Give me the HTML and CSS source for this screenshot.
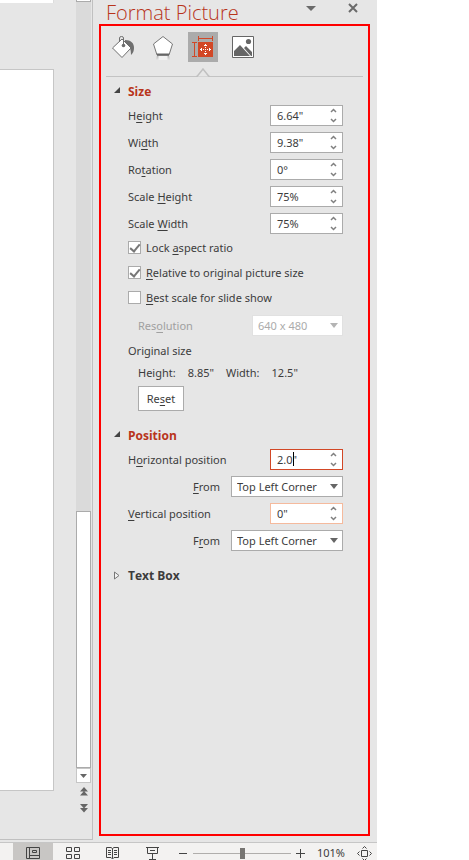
FILE: index.html
```html
<!DOCTYPE html>
<html lang="en">
<head>
<meta charset="utf-8">
<meta name="viewport" content="width=device-width, initial-scale=1">
<title>Format Picture</title>
<link rel="stylesheet" href="styles.css">
</head>
<body>
<div class="app">
  <main class="workspace">
    <section class="canvas" aria-label="Slides">
      <div class="slides">
        <div class="slide slide-previous"></div>
        <div class="slide slide-current"></div>
      </div>
      <div class="scrollbar">
        <div class="track-end"></div>
        <div class="track"></div>
        <div class="thumb"></div>
        <button class="scroll-down" aria-label="Scroll down"><svg width="7" height="4" viewBox="0 0 7 4"><path d="M0 0h7L3.500 4z"/></svg></button>
        <button class="slide-step" aria-label="Previous slide"><svg width="8" height="9" viewBox="0 0 8 9"><path d="M4 0l4 4.500H0zM4 4l4 4.500H0z"/></svg></button>
        <button class="slide-step" aria-label="Next slide"><svg width="8" height="9" viewBox="0 0 8 9"><path d="M0 0h8L4 4.500zM0 4h8L4 8.500z"/></svg></button>
      </div>
    </section>

    <aside class="pane">
      <header class="pane-header">
        <h1>Format Picture</h1>
        <button class="pane-menu" aria-label="Pane options"><svg width="10" height="5" viewBox="0 0 10 5"><path d="M0 0h10L5 5z"/></svg></button>
        <button class="pane-close" aria-label="Close"><svg width="10" height="10" viewBox="0 0 10 10"><path d="M1 1l8 8M9 1L1 9" fill="none" stroke="#6a6a6a" stroke-width="2"/></svg></button>
      </header>

      <div class="pane-frame">
        <nav class="tabs">
          <button class="tab" aria-label="Fill and line">
            <svg width="26" height="26" viewBox="0 0 26 26">
              <path d="M15 6c6 0 9 3 9 8 0 3-1 5-3 7 0-6-1-9-6-11z" fill="#6f6f6f"/>
              <path d="M2.500 14L12 5l9 9-9 9.500z" fill="#fff" stroke="#6f6f6f"/>
              <path d="M9.500 8V4q0-1.500 2-1.500t2 1.500v7" fill="none" stroke="#6f6f6f"/>
              <circle cx="13.500" cy="11.500" r="1.800" fill="#6f6f6f"/>
            </svg>
          </button>
          <button class="tab" aria-label="Effects">
            <svg width="26" height="26" viewBox="0 0 26 26">
              <defs><linearGradient id="fade" x2="0" y2="1"><stop stop-color="#aaa"/><stop offset="1" stop-color="#e6e6e6"/></linearGradient></defs>
              <path d="M7 21h12l1 5H6z" fill="url(#fade)"/><path d="M8.500 22h9v4h-9z" fill="#f1f1f1"/>
              <path d="M13 2.500l9.500 7.500-3.500 11H7L3.500 10z" fill="#fff" stroke="#777"/>
              <path d="M7 20.500h12" stroke="#666" stroke-width="2"/>
            </svg>
          </button>
          <button class="tab tab-selected" aria-label="Size and properties">
            <svg width="30" height="30" viewBox="0 0 30 30">
              <path d="M10 10h15v15H10z" fill="#d24726"/>
              <g fill="none" stroke="#d24726"><path d="M10.500 4v5M24.500 4v5M11 6.500h13M4 10.500h5M4 24.500h5M6.500 11v13"/></g>
              <path d="M17 12h1v1h1v1h-3v-1h1zM17 15h1v1h-1zM17 17h1v1h-1zM17 19h1v1h-1zM15 17h1v1h-1zM19 17h1v1h-1zM16 21h3v1h-1v1h-1v-1h-1zM12 17h1v-1h1v3h-1v-1h-1zM21 16h1v1h1v1h-1v1h-1z" fill="#fff"/>
            </svg>
          </button>
          <button class="tab" aria-label="Picture">
            <svg width="26" height="26" viewBox="0 0 26 26">
              <path d="M2.500 2.500h21v21h-21z" fill="#fff" stroke="#666"/>
              <circle cx="18.500" cy="7.500" r="2.600" fill="#666"/>
              <path d="M4 22v-5l6-6 10 11zM14 14l2-2 6 6v4h-1z" fill="#666"/>
            </svg>
          </button>
        </nav>
        <div class="tab-rule"><svg class="notch" width="14" height="9" viewBox="0 0 14 9"><path d="M0 8.500h1L7 1l6 7.500h1" fill="#e6e6e6" stroke="#c0c0c0" stroke-width="1.500"/></svg></div>

        <form class="settings">
          <section class="group">
            <h2 class="open"><svg class="twisty" width="6" height="6" viewBox="0 0 6 6"><path d="M6 0v6H0z"/></svg>Size</h2>
            <div class="rows">
              <div class="row"><label for="height">H<u>e</u>ight</label>
                <div class="spin"><input id="height" type="text" value="6.64&quot;"><svg class="arrows" width="7" height="15" viewBox="0 0 7 15"><path d="M1 4l2.500-2.500L6 4M1 11l2.500 2.500L6 11"/></svg></div></div>
              <div class="row"><label for="width">Wi<u>d</u>th</label>
                <div class="spin"><input id="width" type="text" value="9.38&quot;"><svg class="arrows" width="7" height="15" viewBox="0 0 7 15"><path d="M1 4l2.500-2.500L6 4M1 11l2.500 2.500L6 11"/></svg></div></div>
              <div class="row"><label for="rotation">Ro<u>t</u>ation</label>
                <div class="spin"><input id="rotation" type="text" value="0°"><svg class="arrows" width="7" height="15" viewBox="0 0 7 15"><path d="M1 4l2.500-2.500L6 4M1 11l2.500 2.500L6 11"/></svg></div></div>
              <div class="row"><label for="scale-height">Scale <u>H</u>eight</label>
                <div class="spin"><input id="scale-height" type="text" value="75%"><svg class="arrows" width="7" height="15" viewBox="0 0 7 15"><path d="M1 4l2.500-2.500L6 4M1 11l2.500 2.500L6 11"/></svg></div></div>
              <div class="row"><label for="scale-width">Scale <u>W</u>idth</label>
                <div class="spin"><input id="scale-width" type="text" value="75%"><svg class="arrows" width="7" height="15" viewBox="0 0 7 15"><path d="M1 4l2.500-2.500L6 4M1 11l2.500 2.500L6 11"/></svg></div></div>
            </div>
            <div class="checks">
              <label class="check"><input type="checkbox" checked><span>Lock <u>a</u>spect ratio</span></label>
              <label class="check"><input type="checkbox" checked><span><u>R</u>elative to original picture size</span></label>
              <label class="check"><input type="checkbox"><span><u>B</u>est scale for slide show</span></label>
            </div>
            <div class="row resolution"><label for="resolution">Res<u>o</u>lution</label>
              <div class="pick pick-small"><select id="resolution" disabled><option>640 x 480</option></select></div></div>
            <p class="original">Original size</p>
            <dl class="measures"><dt>Height:</dt><dd>8.85"</dd><dt>Width:</dt><dd>12.5"</dd></dl>
            <button type="button" class="reset">Re<u>s</u>et</button>
          </section>

          <section class="group">
            <h2 class="open"><svg class="twisty" width="6" height="6" viewBox="0 0 6 6"><path d="M6 0v6H0z"/></svg>Position</h2>
            <div class="rows">
              <div class="row"><label for="horizontal">H<u>o</u>rizontal position</label>
                <div class="spin spin-active"><input id="horizontal" type="text" value="2.0&quot;"><span class="caret"></span><svg class="arrows" width="7" height="15" viewBox="0 0 7 15"><path d="M1 4l2.500-2.500L6 4M1 11l2.500 2.500L6 11"/></svg></div></div>
              <div class="row row-from"><label for="from-x"><u>F</u>rom</label>
                <div class="pick"><select id="from-x"><option>Top Left Corner</option></select></div></div>
              <div class="row"><label for="vertical"><u>V</u>ertical position</label>
                <div class="spin spin-hover"><input id="vertical" type="text" value="0&quot;"><svg class="arrows" width="7" height="15" viewBox="0 0 7 15"><path d="M1 4l2.500-2.500L6 4M1 11l2.500 2.500L6 11"/></svg></div></div>
              <div class="row row-from"><label for="from-y">F<u>r</u>om</label>
                <div class="pick"><select id="from-y"><option>Top Left Corner</option></select></div></div>
            </div>
          </section>

          <section class="group">
            <h2><svg class="twisty" width="6" height="9" viewBox="0 0 6 9"><path d="M.5 1v7L5 4.500z" fill="#f4f4f4" stroke="#777"/></svg>Text Box</h2>
          </section>
        </form>
      </div>
    </aside>
  </main>

  <footer class="status">
    <button class="view view-selected" aria-label="Normal view"><svg width="14" height="12" viewBox="0 0 14 12"><path d="M.5.5h13v11H.5zM3.500.5v11M3.500 8.500h10M6.500 3.500h4v2h-4z"/></svg></button>
    <button class="view" aria-label="Slide sorter"><svg width="14" height="12" viewBox="0 0 14 12"><path d="M.5.5h5v4h-5zM8.500.5h5v4h-5zM.5 7.500h5v4h-5zM8.500 7.500h5v4h-5z"/></svg></button>
    <button class="view" aria-label="Reading view"><svg width="14" height="13" viewBox="0 0 14 13"><path d="M6.500 1.500L5 .5H.5v10H5l1.500 1.500L8 10.500h4.500V.5H8l-1.500 1v10M2 3.500h3M2 5.500h3M2 7.500h3M8 3.500h3M8 5.500h3M8 7.500h3"/></svg></button>
    <button class="view" aria-label="Slide show"><svg width="14" height="13" viewBox="0 0 14 13"><path d="M0 .5h13M1.500.5v6h10v-6M4 3.500h5M6.500 7v5M3 12.500h7"/></svg></button>
    <div class="zoom">
      <button class="step" aria-label="Zoom out"><svg width="9" height="9" viewBox="0 0 9 9"><path d="M0 4.500h8"/></svg></button>
      <input type="range" min="0" max="100" value="51" aria-label="Zoom">
      <button class="step" aria-label="Zoom in"><svg width="9" height="9" viewBox="0 0 9 9"><path d="M0 4.500h9M4.500 0v9"/></svg></button>
      <span class="percent">101%</span>
      <button class="fit" aria-label="Fit slide to window"><svg width="15" height="15" viewBox="0 0 15 15"><path d="M4.500 4.500h6v6h-6zM5.500 2.500l2-2 2 2M5.500 12.500l2 2 2-2M2.500 5.500l-2 2 2 2M12.500 5.500l2 2-2 2"/></svg></button>
    </div>
  </footer>
</div>
</body>
</html>
```
FILE: styles.css
```css
* { box-sizing: border-box; }

body {
  margin: 0;
  background: #fff;
  color: #3c3c3c;
  font: 11px/20px "Noto Sans", "Open Sans", sans-serif;
}

button, input, select { margin: 0; font: inherit; color: inherit; }
button { padding: 0; border: 0; background: none; }
svg { display: block; flex: none; }
u { text-underline-offset: 2px; }

.app {
  display: flex;
  flex-direction: column;
  height: 100vh;
  margin-right: 92px;
  overflow: hidden;
  background: #e6e6e6;
}

.workspace { display: flex; flex: 1; min-height: 0; }

/* slide canvas */
.canvas {
  display: flex;
  justify-content: space-between;
  width: 93px;
  margin-bottom: 2px;
  padding-right: 1px;
  border-right: 1px solid #c0c0c0;
  border-bottom: 1px solid #c0c0c0;
}
.slides { display: flex; flex-direction: column; width: 54px; padding-bottom: 48px; }
.slide { background: #fff; border-right: 1px solid #c6c6c6; }
.slide-previous { height: 3px; margin-bottom: 66px; border-color: #ddd; }
.slide-current { flex: 1; border-top: 1px solid #c6c6c6; border-bottom: 1px solid #c6c6c6; }

.scrollbar { display: flex; flex-direction: column; width: 15px; padding-bottom: 22px; }
.track-end { height: 2px; background: #fff; border: 1px solid #ababab; border-top: 0; }
.track { flex: 2; background: #dadada; }
.thumb { flex: 1; background: #fff; border: 1px solid #ababab; }
.scroll-down {
  display: grid;
  place-items: center;
  height: 15px;
  background: #fff;
  border: 1px solid #c6c6c6;
  fill: #666;
}
.slide-step { display: grid; place-items: center; height: 17px; fill: #666; }

/* format pane */
.pane { display: flex; flex: 1; flex-direction: column; min-width: 0; padding: 0 7px 6px 6px; }
.pane-header { display: flex; align-items: flex-start; height: 24px; padding: 0 12px 0 7px; }
.pane-header h1 {
  flex: 1;
  margin: 0;
  color: #b8341b;
  font-family: "Open Sans", sans-serif;
  font-size: 20px;
  font-weight: 300;
  line-height: 26px;
}
.pane-menu { margin: 6px 32px 0 0; fill: #6a6a6a; }
.pane-close { margin-top: 3px; }
.pane-frame { flex: 1; border: 2px solid #f00; }

.tabs { display: flex; gap: 10px; padding: 6px 7px 0; }
.tab { display: grid; place-items: center; width: 30px; height: 30px; }
.tab-selected { background: #ababab; }
.tab-rule { position: relative; height: 15px; margin: 0 5px; border-bottom: 1px solid #c3c3c3; }
.notch { position: absolute; left: 90px; bottom: -1px; }

.settings { padding: 5px 25px 0 27px; }
.group { margin-bottom: 15px; }
.group h2 { position: relative; margin: 0 0 3px; font-family: "Open Sans", sans-serif; font-size: 12px; font-weight: 700; line-height: 20px; }
.group h2.open { color: #b8341b; }
.twisty { position: absolute; left: -14px; top: 5px; fill: #444; }

.rows { display: grid; gap: 6px; }
.row { display: flex; align-items: center; justify-content: space-between; height: 21px; }
.row-from { justify-content: flex-end; gap: 11px; }

.spin {
  position: relative;
  display: flex;
  align-items: center;
  width: 73px;
  height: 21px;
  padding-right: 5px;
  background: #fff;
  border: 1px solid #ababab;
}
.spin input { flex: 1; min-width: 0; height: 19px; padding: 0 0 0 6px; border: 0; outline: 0; background: none; }
.spin-active { border-color: #d24726; }
.spin-hover { border-color: #f5ba9d; }
.arrows { fill: none; stroke: #808080; stroke-width: 1.5; }
.caret { position: absolute; left: 22px; top: 2px; width: 1px; height: 14px; background: #000; }

.check { display: flex; align-items: center; gap: 5px; height: 25px; }
.checks { padding-top: 1px; }
.check input {
  appearance: none;
  display: grid;
  place-items: center;
  width: 13px;
  height: 13px;
  background: #fff;
  border: 1px solid #ababab;
}
.check input:checked::before {
  content: "";
  width: 4px;
  height: 8px;
  margin-bottom: 2px;
  border: solid #777;
  border-width: 0 2px 2px 0;
  transform: rotate(40deg);
}

.pick { position: relative; width: 112px; }
.pick-small { width: 91px; }
.pick select {
  appearance: none;
  display: block;
  width: 100%;
  height: 21px;
  padding: 0 18px 0 5px;
  background: #fff;
  border: 1px solid #ababab;
  border-radius: 0;
  outline: 0;
}
.pick::after {
  content: "";
  position: absolute;
  top: 8px;
  right: 5px;
  border: solid transparent;
  border-width: 5px 4px 0;
  border-top-color: #666;
}
.resolution { margin: 5px 0; padding-left: 10px; color: #a0a0a0; }
.pick select:disabled { border-color: #e1e1e1; color: #ababab; opacity: 1; }
.pick-small::after { border-top-color: #b4b4b4; }

.original { margin: 0 0 2px; }
.measures { display: flex; gap: 12px; margin: 0 0 3px; padding-left: 10px; }
.measures dd { margin: 0; }
.reset { display: block; width: 46px; height: 25px; margin-left: 10px; background: #fff; border: 1px solid #ababab; }

/* status bar */
.status {
  display: flex;
  height: 18px;
  padding: 0 5px 0 13px;
  background: #f3f2f1;
  border-top: 1px solid #c6c6c6;
}
.status svg { fill: none; stroke: #444; }
.view { display: flex; justify-content: center; flex: none; width: 40px; padding-top: 4px; }
.view-selected { background: #c8c6c4; }
.zoom { display: flex; flex: 1; align-items: center; min-width: 0; padding: 3px 0 0 6px; }
.step { padding: 0; }
.zoom input { appearance: none; flex: 1; min-width: 0; height: 11px; margin: 0 5px; background: linear-gradient(#b0aeac, #b0aeac) center / 100% 1px no-repeat; }
.zoom input::-webkit-slider-thumb { appearance: none; width: 5px; height: 11px; background: #777572; }
.percent { margin: 0 12px; line-height: 14px; }
```
